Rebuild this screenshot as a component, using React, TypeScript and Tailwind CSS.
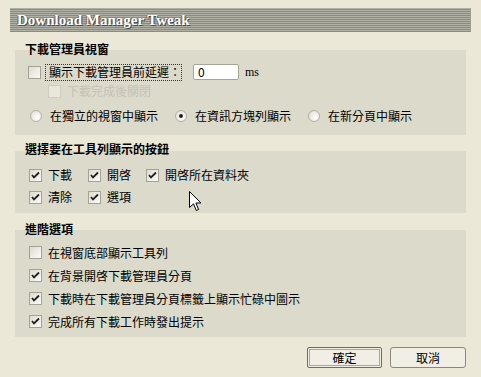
import React from "react";

const font = "font-['Noto_Sans_CJK_TC','Noto_Sans_CJK_SC',sans-serif]";

const CheckBox = ({ checked, disabled }: { checked?: boolean; disabled?: boolean }) => (
  <span
    className={`relative inline-flex w-[13px] h-[13px] shrink-0 items-center justify-center border ${
      disabled
        ? "border-[#cfccbe] bg-[#e9e7dc]"
        : "border-[#a4a294] bg-[linear-gradient(135deg,#dddbd0,#fbfbf8)]"
    }`}
  >
    {checked && (
      <svg width="9" height="9" viewBox="0 0 9 9">
        <path d="M1 4 L3 6.5 L8 1.5" fill="none" stroke="#21211c" strokeWidth="1.8" />
      </svg>
    )}
  </span>
);

const Radio = ({ checked }: { checked?: boolean }) => (
  <span className="inline-flex w-[12px] h-[12px] shrink-0 items-center justify-center rounded-full border border-[#b2b0a2] bg-[radial-gradient(circle_at_65%_65%,#ffffff,#dcdad0)]">
    {checked && <span className="w-[4px] h-[4px] rounded-full bg-[#222]" />}
  </span>
);

const Row = ({ label, checked }: { label: string; checked?: boolean }) => (
  <div className="h-[23px] flex items-center pl-[14px] gap-[6px]">
    <CheckBox checked={checked} />
    <span>{label}</span>
  </div>
);

const App = () => {
  return (
    <div
      className={`relative w-[481px] h-[377px] overflow-hidden bg-[#ebe8d8] text-[12px] leading-[14px] text-black ${font}`}
    >
      {/* title bar */}
      <div className="mx-[10px] mt-[8px] h-[24px] flex items-center pl-[7px] bg-[repeating-linear-gradient(to_bottom,#b1b0a4_0px,#b1b0a4_1px,#8c8b80_1px,#8c8b80_2px)]">
        <span className="font-['Liberation_Serif',serif] font-bold text-[15px] text-white [text-shadow:1px_1px_0_#4a4a44,-1px_0_0_#6b6a62]">
          Download Manager Tweak
        </span>
      </div>

      <div className="px-[15px]">
        {/* section 1 */}
        <div className="mt-[10px] pb-[9px] bg-[linear-gradient(to_bottom,transparent_8px,#dcdacb_8px)]">
          <div className="h-[14px] pl-[10px] font-bold">下載管理員視窗</div>
          <div className="mt-[7px] h-[18px] flex items-center pl-[13px]">
            <CheckBox />
            <span className="ml-[4px] h-[17px] w-[137px] flex items-center pl-[3px] border border-dotted border-[#333]">
              顯示下載管理員前延遲：
            </span>
            <span className="ml-[11px] w-[46px] h-[16px] flex items-center pl-[4px] bg-white border border-[#a7a597] rounded-[2px]">
              0
            </span>
            <span className="ml-[6px] font-['Liberation_Serif',serif] text-[12px]">ms</span>
          </div>
          <div className="h-[20px] flex items-center pl-[33px] gap-[6px] text-[#c5c2b4]">
            <CheckBox disabled />
            <span>下載完成後關閉</span>
          </div>
          <div className="mt-[5px] h-[20px] flex items-center pl-[15px]">
            <div className="w-[145px] flex items-center gap-[8px]">
              <Radio />
              <span>在獨立的視窗中顯示</span>
            </div>
            <div className="w-[133px] flex items-center gap-[8px]">
              <Radio checked />
              <span>在資訊方塊列顯示</span>
            </div>
            <div className="flex items-center gap-[8px]">
              <Radio />
              <span>在新分頁中顯示</span>
            </div>
          </div>
        </div>

        {/* section 2 */}
        <div className="mt-[7px] pb-[7px] bg-[linear-gradient(to_bottom,transparent_9px,#dcdacb_9px)]">
          <div className="h-[14px] pl-[10px] font-bold">選擇要在工具列顯示的按鈕</div>
          <div className="mt-[10px] h-[18px] flex items-center pl-[14px]">
            <div className="w-[59px] flex items-center gap-[6px]">
              <CheckBox checked />
              <span>下載</span>
            </div>
            <div className="w-[58px] flex items-center gap-[6px]">
              <CheckBox checked />
              <span>開啓</span>
            </div>
            <div className="flex items-center gap-[6px]">
              <CheckBox checked />
              <span>開啓所在資料夾</span>
            </div>
          </div>
          <div className="mt-[4px] h-[18px] flex items-center pl-[14px]">
            <div className="w-[59px] flex items-center gap-[6px]">
              <CheckBox checked />
              <span>清除</span>
            </div>
            <div className="flex items-center gap-[6px]">
              <CheckBox checked />
              <span>選項</span>
            </div>
          </div>
        </div>

        {/* section 3 */}
        <div className="mt-[9px] pb-[4px] bg-[linear-gradient(to_bottom,transparent_8px,#dcdacb_8px)]">
          <div className="h-[14px] pl-[10px] font-bold">進階選項</div>
          <div className="mt-[5px]">
            <Row label="在視窗底部顯示工具列" />
            <Row label="在背景開啓下載管理員分頁" checked />
            <Row label="下載時在下載管理員分頁標籤上顯示忙碌中圖示" checked />
            <Row label="完成所有下載工作時發出提示" checked />
          </div>
        </div>

        {/* buttons */}
        <div className="mt-[10px] flex justify-end gap-[8px]">
          <button className="w-[75px] h-[21px] flex items-center justify-center border border-[#6f6d62] rounded-[2px] bg-[#f1efe5] shadow-[inset_0_0_0_1px_#f1efe5,inset_0_0_0_2px_#a9a799]">
            確定
          </button>
          <button className="w-[76px] h-[21px] flex items-center justify-center border border-[#8a887c] rounded-[3px] bg-[#f1efe5]">
            取消
          </button>
        </div>
      </div>

      {/* mouse cursor */}
      <svg className="absolute left-[189px] top-[191px]" width="13" height="21" viewBox="0 0 13 21">
        <path
          d="M0.5 0.5 L0.5 16.5 L4.5 12.8 L7.3 19.5 L9.6 18.5 L6.9 12 L12 12 Z"
          fill="#fff"
          stroke="#000"
          strokeWidth="1"
          strokeLinejoin="miter"
        />
      </svg>
    </div>
  );
};

export default App;
